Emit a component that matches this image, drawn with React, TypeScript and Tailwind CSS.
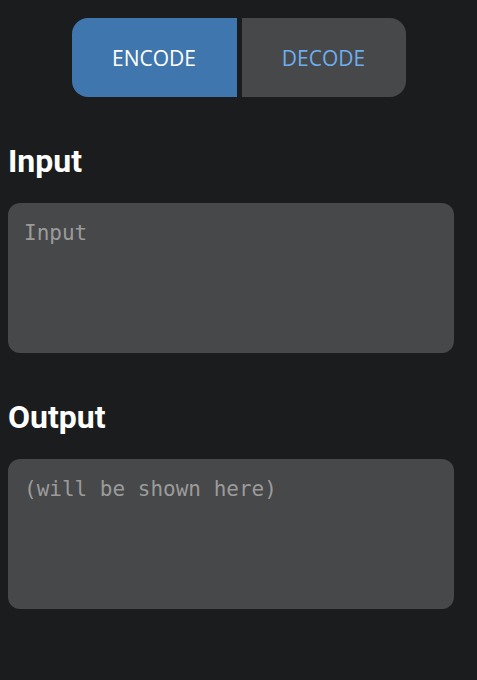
import { useState } from "react";

const Field = ({ label, placeholder }: { label: string; placeholder: string }) => {
  return (
    <section className="flex flex-col">
      <h2 className="h-[38px] text-[32px] leading-[38px] font-bold text-white font-['Roboto',sans-serif]">{label}</h2>
      <textarea
        readOnly
        placeholder={placeholder}
        className="mt-[23px] h-[150px] w-[446px] resize-none rounded-xl bg-[#474849] px-4 py-4 text-[21px] leading-[28px] text-white outline-none placeholder:text-[#9b9b9b] font-['DejaVu_Sans_Mono',monospace]"
      />
    </section>
  );
};

const App = () => {
  const [mode, setMode] = useState<"encode" | "decode">("encode");

  return (
    <div className="min-h-[680px] bg-[#1b1c1e] pt-[18px] pl-2 font-['Open_Sans',sans-serif]">
      <div className="flex justify-center gap-[5px] pr-2">
        <button
          onClick={() => setMode("encode")}
          className={`h-[79px] w-[165px] rounded-l-2xl pt-[2px] text-[21px] ${mode === "encode" ? "bg-[#3f76ad] text-white" : "bg-[#474849] text-[#6eaef0]"}`}
        >
          ENCODE
        </button>
        <button
          onClick={() => setMode("decode")}
          className={`h-[79px] w-[164px] rounded-r-2xl pt-[2px] text-[21px] ${mode === "decode" ? "bg-[#3f76ad] text-white" : "bg-[#474849] text-[#6eaef0]"}`}
        >
          DECODE
        </button>
      </div>
      <div className="mt-[45px] flex flex-col gap-[45px]">
        <Field label="Input" placeholder="Input" />
        <Field label="Output" placeholder="(will be shown here)" />
      </div>
    </div>
  );
};

export default App;
